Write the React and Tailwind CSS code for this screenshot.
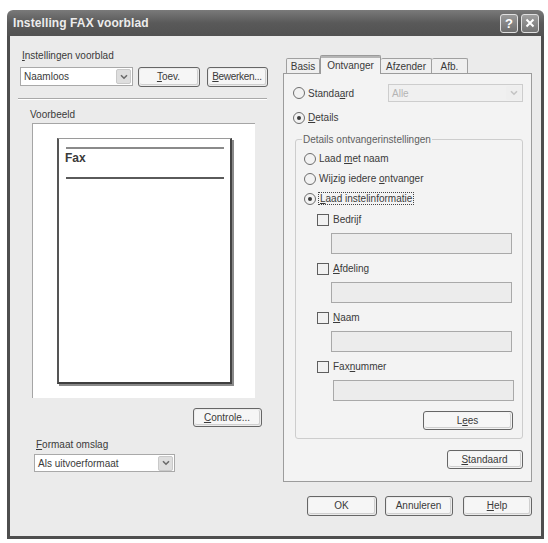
import React from "react";

function Chevron({ color = "#555" }) {
  return (
    <svg width="8" height="6" viewBox="0 0 8 6">
      <path d="M1 1.2 L4 4.2 L7 1.2" fill="none" stroke={color} strokeWidth="1.6" />
    </svg>
  );
}

function Combo({ text, className, disabled }) {
  return (
    <div className={className}>
      <span className={disabled ? "flex-1 pl-[3px] text-[#b4b4b4] truncate" : "flex-1 pl-[3px] truncate"}>{text}</span>
      <span className={disabled ? "mr-[1px] flex h-[14px] w-[15px] items-center justify-center rounded-[2px] bg-[#eeeeee]" : "mr-[1px] flex h-[15px] w-[15px] items-center justify-center rounded-[2px] border border-[#c9c9c9] bg-[#dedede]"}>
        <Chevron color={disabled ? "#c4c4c4" : "#6a6a6a"} />
      </span>
    </div>
  );
}

function Btn({ children, className }) {
  return (
    <div className={className}>
      <div className="flex h-full w-full items-center justify-center rounded-[2px] border-b border-r border-[#cfcfcf] bg-[#f6f6f6]">
        {children}
      </div>
    </div>
  );
}

function Radio({ checked }) {
  return (
    <span className="flex h-[12px] w-[12px] shrink-0 items-center justify-center rounded-full border border-[#6e6e6e] bg-[#f2f2f2]">
      {checked && <span className="h-[4px] w-[4px] rounded-full bg-[#3a3a3a]" />}
    </span>
  );
}

function Check() {
  return <span className="h-[12px] w-[12px] shrink-0 border border-[#5e5e5e] bg-[#f1f1f1]" />;
}

export default function App() {
  return (
    <div className="h-[543px] w-[548px] overflow-hidden bg-white pl-[7px] pt-[10px] font-[Liberation_Sans,Arial,sans-serif] text-[10px] leading-[13px] text-[#3a3a3a]">
      <div className="flex h-[529px] w-[537px] flex-col">
        {/* title bar */}
        <div className="flex h-[26px] shrink-0 items-center rounded-t-[6px] bg-gradient-to-b from-[#7a7a7a] via-[#595959] to-[#525252] pl-[6px] pr-[5px]">
          <span className="flex-1 text-[12px] font-bold tracking-[0.1px] text-[#ececec]">Instelling FAX voorblad</span>
          <div className="flex h-[19px] w-[18px] items-center justify-center rounded-[3px] border border-[#e0e0e0] bg-gradient-to-b from-[#9a9a9a] to-[#6e6e6e] text-[13px] font-bold text-white">?</div>
          <div className="ml-[3px] flex h-[19px] w-[18px] items-center justify-center rounded-[3px] border border-[#e0e0e0] bg-gradient-to-b from-[#a0a0a0] to-[#747474]">
            <svg width="10" height="10" viewBox="0 0 10 10">
              <path d="M1.5 1.5 L8.5 8.5 M8.5 1.5 L1.5 8.5" stroke="white" strokeWidth="2" />
            </svg>
          </div>
        </div>
        {/* body */}
        <div className="flex flex-1 border-x-[3px] border-b-[3px] border-[#4e4e4e] bg-[#ebebeb]">
          {/* left column */}
          <div className="flex w-[262px] shrink-0 flex-col">
            <div className="ml-[12px] mt-[13px] h-[13px]">
              <u>I</u>nstellingen voorblad
            </div>
            <div className="mt-[5px] flex items-start">
              <Combo text="Naamloos" className="ml-[10px] flex h-[19px] w-[113px] items-center border border-[#a9a9a9] bg-white" />
              <Btn className="ml-[5px] h-[20px] w-[62px] rounded-[3px] border border-[#666666] p-[1px]">
                <span><u>T</u>oev.</span>
              </Btn>
              <Btn className="ml-[7px] h-[20px] w-[61px] rounded-[3px] border border-[#666666] p-[1px]">
                <span className="tracking-[-0.3px]"><u>B</u>ewerken...</span>
              </Btn>
            </div>
            <div className="ml-[8px] mt-[11px] h-[2px] w-[249px] border-b border-t border-b-white border-t-[#a9a9a9]" />
            <div className="ml-[20px] mt-[8px] h-[13px]">Voorbeeld</div>
            <div className="ml-[22px] mt-[2px] h-[275px] w-[223px] border-l border-t border-[#a5a5a5] bg-white pl-[24px] pt-[14px]">
              <div className="h-[246px] w-[175px] border-b-2 border-l-2 border-r-2 border-t border-b-[#3f3f3f] border-l-[#555555] border-r-[#444444] border-t-[#9a9a9a] bg-white shadow-[2px_2px_0_#8a8a8a] pl-[7px] pt-[8px]">
                <div className="h-[2px] w-[158px] bg-[#8a8a8a]" />
                <div className="ml-[-1px] mt-[2px] h-[14px] text-[12px] font-bold leading-[14px] text-[#3a3a3a]">Fax</div>
                <div className="mt-[12px] h-[2px] w-[158px] bg-[#5a5a5a]" />
              </div>
            </div>
            <Btn className="ml-[183px] mt-[10px] h-[19px] w-[69px] rounded-[3px] border border-[#666666] p-[1px]">
              <span><u>C</u>ontrole...</span>
            </Btn>
            <div className="ml-[26px] mt-[11px] h-[13px]">
              <u>F</u>ormaat omslag
            </div>
            <Combo text="Als uitvoerformaat" className="ml-[24px] mt-[3px] flex h-[18px] w-[141px] items-center border border-[#a9a9a9] bg-white" />
          </div>
          {/* right column */}
          <div className="ml-[11px] flex w-[249px] shrink-0 flex-col">
            <div className="relative z-10 mt-[19px] flex h-[18px] items-end pl-[3px]">
              <div className="flex h-[15px] w-[34px] items-center justify-center rounded-t-[2px] border border-b-0 border-[#a0a0a0] bg-[#efefef]">Basis</div>
              <div className="mb-[-1px] flex h-[19px] w-[61px] flex-col rounded-t-[2px] border border-b-0 border-[#9a9a9a] bg-[#f3f3f3]">
                <div className="h-[2px] w-full bg-[#b5b5b5]" />
                <div className="flex flex-1 items-center justify-center pb-[1px]">Ontvanger</div>
              </div>
              <div className="flex h-[15px] w-[51px] items-center justify-center rounded-t-[2px] border border-b-0 border-l-0 border-[#a0a0a0] bg-[#efefef]">Afzender</div>
              <div className="flex h-[15px] w-[36px] items-center justify-center rounded-t-[2px] border border-b-0 border-l-0 border-[#a0a0a0] bg-[#efefef]">Afb.</div>
            </div>
            <div className="flex h-[409px] w-[249px] flex-col border border-[#9c9c9c] bg-[#f3f3f3]">
              <div className="mt-[10px] flex h-[18px] items-center pl-[9px]">
                <div className="flex w-[95px] items-center">
                  <Radio />
                  <span className="ml-[3px]">Standa<u>a</u>rd</span>
                </div>
                <Combo disabled text="Alle" className="flex h-[18px] w-[135px] items-center border border-[#cdcdcd] bg-[#f0f0f0]" />
              </div>
              <div className="mt-[9px] flex h-[13px] items-center pl-[9px]">
                <Radio checked />
                <span className="ml-[3px]"><u>D</u>etails</span>
              </div>
              <div className="relative ml-[11px] mt-[15px] flex h-[300px] w-[228px] flex-col rounded-[3px] border border-[#cdcdcd]">
                <span className="absolute left-[6px] top-[-7px] bg-[#f3f3f3] px-[1px] text-[#606060]">Details ontvangerinstellingen</span>
                <div className="ml-[8px] mt-[12px] flex h-[13px] items-center">
                  <Radio />
                  <span className="ml-[3px]">Laad <u>m</u>et naam</span>
                </div>
                <div className="ml-[8px] mt-[7px] flex h-[13px] items-center">
                  <Radio />
                  <span className="ml-[3px]">Wijzig iedere <u>o</u>ntvanger</span>
                </div>
                <div className="ml-[8px] mt-[7px] flex h-[13px] items-center">
                  <Radio checked />
                  <span className="ml-[2px] border border-dotted border-[#444] px-[1px] leading-[11px]"><u>L</u>aad instelinformatie</span>
                </div>
                <div className="ml-[21px] mt-[8px] flex h-[13px] items-center">
                  <Check />
                  <span className="ml-[4px]">Bedrijf</span>
                </div>
                <div className="ml-[35px] mt-[7px] h-[21px] w-[181px] border border-[#a9a9a9] bg-[#ececec]" />
                <div className="ml-[21px] mt-[8px] flex h-[13px] items-center">
                  <Check />
                  <span className="ml-[4px]"><u>A</u>fdeling</span>
                </div>
                <div className="ml-[35px] mt-[7px] h-[21px] w-[181px] border border-[#a9a9a9] bg-[#ececec]" />
                <div className="ml-[21px] mt-[8px] flex h-[13px] items-center">
                  <Check />
                  <span className="ml-[4px]"><u>N</u>aam</span>
                </div>
                <div className="ml-[35px] mt-[7px] h-[21px] w-[181px] border border-[#a9a9a9] bg-[#ececec]" />
                <div className="ml-[21px] mt-[8px] flex h-[13px] items-center">
                  <Check />
                  <span className="ml-[4px]">Fax<u>n</u>ummer</span>
                </div>
                <div className="ml-[37px] mt-[7px] h-[21px] w-[181px] border border-[#a9a9a9] bg-[#ececec]" />
                <Btn className="ml-[127px] mt-[10px] h-[19px] w-[90px] rounded-[3px] border border-[#666666] p-[1px]">
                  <span>L<u>e</u>es</span>
                </Btn>
              </div>
              <Btn className="ml-[163px] mt-[11px] h-[19px] w-[76px] rounded-[3px] border border-[#666666] p-[1px]">
                <span><u>S</u>tandaard</span>
              </Btn>
            </div>
            <div className="mt-[14px] flex">
              <Btn className="ml-[24px] h-[20px] w-[70px] rounded-[3px] border border-[#666666] p-[1px]">
                <span>OK</span>
              </Btn>
              <Btn className="ml-[8px] h-[20px] w-[68px] rounded-[3px] border border-[#666666] p-[1px]">
                <span>Annuleren</span>
              </Btn>
              <Btn className="ml-[10px] h-[20px] w-[69px] rounded-[3px] border border-[#666666] p-[1px]">
                <span><u>H</u>elp</span>
              </Btn>
            </div>
          </div>
        </div>
      </div>
    </div>
  );
}
